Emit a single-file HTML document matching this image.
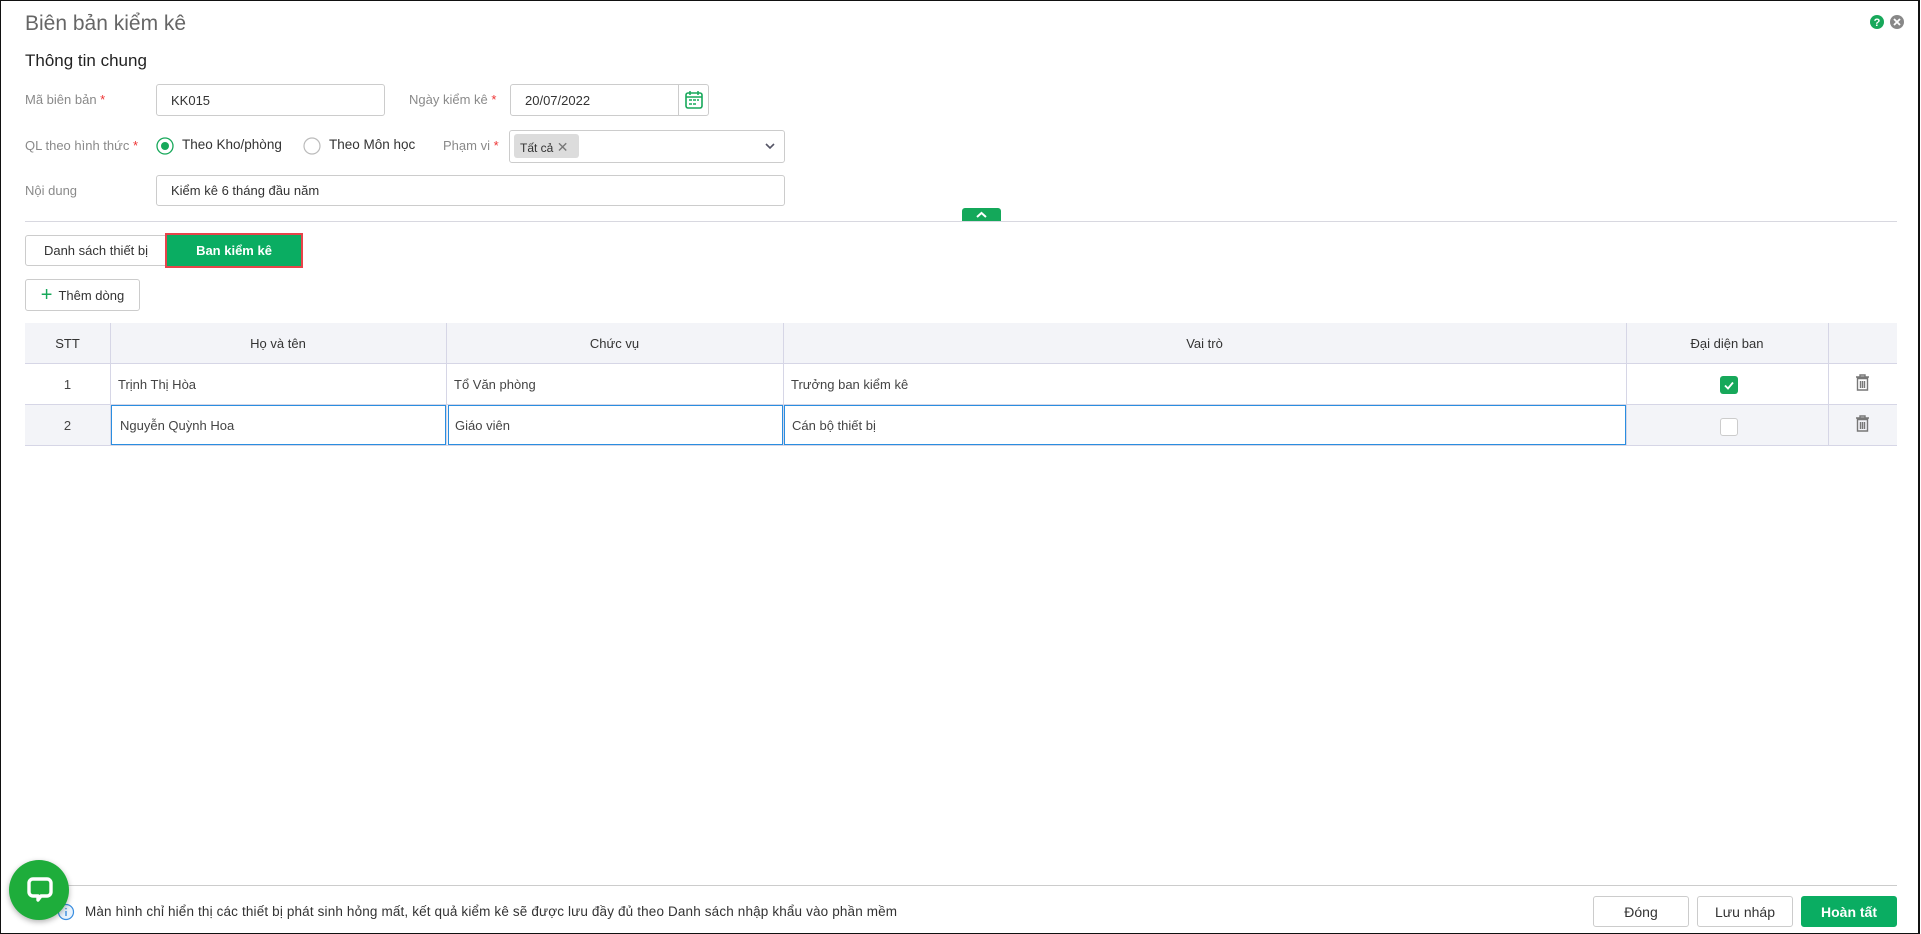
<!DOCTYPE html>
<html><head><meta charset="utf-8"><style>
*{box-sizing:border-box;margin:0;padding:0}
body{width:1921px;height:934px;overflow:hidden;background:#fff;font-family:"Liberation Sans",sans-serif;font-size:13px;color:#333;position:relative}
.a{position:absolute}
.frame{left:0;top:0;width:1920px;height:934px;border:1.5px solid #111;border-right-width:2.5px}
.lbl{color:#8a8a8a;font-size:13px;line-height:16px}
.req{color:#e33}
.inp{border:1px solid #ccc;border-radius:3px;background:#fff;padding-left:14px;display:flex;align-items:center;font-size:13px;color:#333}
.th{position:absolute;top:323px;height:40px;display:flex;align-items:center;justify-content:center;font-size:13px;color:#333}
.btn{border:1px solid #ccc;border-radius:3px;background:#fff;display:flex;align-items:center;justify-content:center;font-size:14px;color:#333}
.cell{display:flex;align-items:center;font-size:13px;color:#444}
</style></head><body>
<div class="a frame"></div>
<div class="a" style="left:25px;top:12px;font-size:21px;color:#666">Biên bản kiểm kê</div>
<svg class="a" style="left:1870px;top:15px" width="35" height="15"><circle cx="7" cy="7" r="7" fill="#17a85a"/><text x="7" y="11" font-size="11" font-weight="bold" fill="#fff" text-anchor="middle" font-family="Liberation Sans">?</text><circle cx="27" cy="7" r="7" fill="#888"/><path d="M24 4l6 6M30 4l-6 6" stroke="#fff" stroke-width="1.8"/></svg>
<div class="a" style="left:25px;top:51px;font-size:17px;color:#222">Thông tin chung</div>

<div class="a lbl" style="left:25px;top:92px">Mã biên bản <span class="req">*</span></div>
<div class="a inp" style="left:156px;top:84px;width:229px;height:32px">KK015</div>
<div class="a lbl" style="left:409px;top:92px">Ngày kiểm kê <span class="req">*</span></div>
<div class="a inp" style="left:510px;top:84px;width:199px;height:32px">20/07/2022</div>
<div class="a" style="left:678px;top:85px;width:1px;height:30px;background:#ccc"></div>
<svg class="a" style="left:684px;top:90px" width="20" height="20"><rect x="2" y="3" width="16" height="15" rx="2" fill="none" stroke="#17a85a" stroke-width="1.6"/><path d="M2 7h16M6 1v4M14 1v4M5 10h3M9 10h3M13 10h2M5 14h3M9 14h3" stroke="#17a85a" stroke-width="1.5"/></svg>

<div class="a lbl" style="left:25px;top:138px">QL theo hình thức <span class="req">*</span></div>
<svg class="a" style="left:156px;top:137px" width="18" height="18"><circle cx="9" cy="9" r="8" fill="none" stroke="#17a85a" stroke-width="1.3"/><circle cx="9" cy="9" r="4" fill="#17a85a"/></svg>
<div class="a" style="left:182px;top:137px;font-size:13.5px;color:#333">Theo Kho/phòng</div>
<svg class="a" style="left:303px;top:137px" width="18" height="18"><circle cx="9" cy="9" r="8" fill="none" stroke="#bbb" stroke-width="1.2"/></svg>
<div class="a" style="left:329px;top:137px;font-size:13.5px;color:#333">Theo Môn học</div>
<div class="a lbl" style="left:443px;top:138px">Phạm vi <span class="req">*</span></div>
<div class="a inp" style="left:509px;top:130px;width:276px;height:33px;padding-left:0"></div>
<div class="a" style="left:514px;top:134px;width:65px;height:24px;background:#dcdcdc;border-radius:3px;font-size:12px;color:#333;padding:5px 0 0 6px">Tất cả <span style="color:#777;font-size:14px">✕</span></div>
<svg class="a" style="left:764px;top:141px" width="12" height="10"><path d="M2 3l4 4 4-4" fill="none" stroke="#556" stroke-width="1.6"/></svg>

<div class="a lbl" style="left:25px;top:183px">Nội dung</div>
<div class="a inp" style="left:156px;top:175px;width:629px;height:31px">Kiểm kê 6 tháng đầu năm</div>

<div class="a" style="left:25px;top:221px;width:1872px;height:1px;background:#d8d8e0"></div>
<div class="a" style="left:962px;top:208px;width:39px;height:13px;background:#14a85a;border-radius:3px 3px 0 0"></div>
<svg class="a" style="left:975px;top:210px" width="13" height="9"><path d="M2 7l4.5-4 4.5 4" fill="none" stroke="#fff" stroke-width="2"/></svg>

<div class="a btn" style="left:25px;top:235px;width:142px;height:31px;font-size:13px;border-radius:3px 0 0 3px">Danh sách thiết bị</div>
<div class="a" style="left:165px;top:233px;width:138px;height:35px;border:2px solid #e8434a;background:#0aad62;color:#fff;font-weight:bold;font-size:13px;display:flex;align-items:center;justify-content:center">Ban kiểm kê</div>

<div class="a btn" style="left:25px;top:279px;width:115px;height:32px;font-size:13px"><span style="color:#17a85a;font-size:20px;margin-right:6px;line-height:14px">+</span>Thêm dòng</div>

<div class="a" style="left:25px;top:323px;width:1872px;height:40px;background:#f3f4f8"></div>
<div class="a" style="left:25px;top:404px;width:1872px;height:41px;background:#f3f4f8"></div>
<div class="a" style="left:25px;top:363px;width:1872px;height:1px;background:#d6d6e6"></div>
<div class="a" style="left:25px;top:404px;width:1872px;height:1px;background:#d6d6e6"></div>
<div class="a" style="left:25px;top:445px;width:1872px;height:1px;background:#d6d6e6"></div>
<div class="a" style="left:110px;top:323px;width:1px;height:122px;background:#d6d6e6"></div>
<div class="a" style="left:446px;top:323px;width:1px;height:122px;background:#d6d6e6"></div>
<div class="a" style="left:783px;top:323px;width:1px;height:122px;background:#d6d6e6"></div>
<div class="a" style="left:1626px;top:323px;width:1px;height:122px;background:#d6d6e6"></div>
<div class="a" style="left:1828px;top:323px;width:1px;height:122px;background:#d6d6e6"></div>
<div class="th" style="left:25px;width:85px">STT</div>
<div class="th" style="left:110px;width:336px">Họ và tên</div>
<div class="th" style="left:446px;width:337px">Chức vụ</div>
<div class="th" style="left:783px;width:843px">Vai trò</div>
<div class="th" style="left:1626px;width:202px">Đại diện ban</div>

<div class="a cell" style="left:25px;top:364px;width:85px;height:40px;justify-content:center">1</div>
<div class="a cell" style="left:118px;top:364px;height:40px">Trịnh Thị Hòa</div>
<div class="a cell" style="left:454px;top:364px;height:40px">Tổ Văn phòng</div>
<div class="a cell" style="left:791px;top:364px;height:40px">Trưởng ban kiểm kê</div>
<svg class="a" style="left:1720px;top:376px" width="18" height="18"><rect width="18" height="18" rx="3" fill="#17a85a"/><path d="M5 9.5l3 3 5-6" fill="none" stroke="#fff" stroke-width="1.8"/></svg>
<svg class="a" style="left:1855px;top:374px" width="15" height="17"><path d="M1 3h13M5 3V1h5v2M2.5 4.5h10v11.5h-10z M5.5 7v7M7.5 7v7M9.5 7v7" fill="none" stroke="#777" stroke-width="1.4"/></svg>

<div class="a cell" style="left:25px;top:405px;width:85px;height:40px;justify-content:center">2</div>
<div class="a cell" style="left:111px;top:405px;width:335px;height:40px;background:#fff;border:1.5px solid #2a8ee0;padding-left:8px">Nguyễn Quỳnh Hoa</div>
<div class="a cell" style="left:448px;top:405px;width:335px;height:40px;background:#fff;border:1.5px solid #2a8ee0;padding-left:6px">Giáo viên</div>
<div class="a cell" style="left:784px;top:405px;width:842px;height:40px;background:#fff;border:1.5px solid #2a8ee0;padding-left:7px">Cán bộ thiết bị</div>
<div class="a" style="left:1720px;top:418px;width:18px;height:18px;border:1px solid #ccc;border-radius:3px;background:#fff"></div>
<svg class="a" style="left:1855px;top:415px" width="15" height="17"><path d="M1 3h13M5 3V1h5v2M2.5 4.5h10v11.5h-10z M5.5 7v7M7.5 7v7M9.5 7v7" fill="none" stroke="#777" stroke-width="1.4"/></svg>

<div class="a" style="left:60px;top:885px;width:1837px;height:1px;background:#ccc"></div>
<svg class="a" style="left:57px;top:903px" width="18" height="18"><circle cx="9" cy="9" r="7.5" fill="#e8f2fc" stroke="#3a8ee0" stroke-width="1.2"/><path d="M9 8v5M9 5v1.3" stroke="#3a8ee0" stroke-width="1.4"/></svg>
<div class="a" style="left:85px;top:904px;font-size:13.5px;color:#333;letter-spacing:0.15px">Màn hình chỉ hiển thị các thiết bị phát sinh hỏng mất, kết quả kiểm kê sẽ được lưu đầy đủ theo Danh sách nhập khẩu vào phần mềm</div>
<div class="a btn" style="left:1593px;top:896px;width:96px;height:31px">Đóng</div>
<div class="a btn" style="left:1697px;top:896px;width:96px;height:31px">Lưu nháp</div>
<div class="a btn" style="left:1801px;top:896px;width:96px;height:31px;background:#0aad62;border-color:#0aad62;color:#fff;font-weight:bold">Hoàn tất</div>

<div class="a" style="left:9px;top:860px;width:60px;height:60px;border-radius:50%;background:#1ead3b;box-shadow:0 2px 6px rgba(0,0,0,.3)"></div>
<svg class="a" style="left:26px;top:876px" width="28" height="28"><path d="M7 3h14a4 4 0 0 1 4 4v9a4 4 0 0 1-4 4h-6l-3 4v-4H7a4 4 0 0 1-4-4V7a4 4 0 0 1 4-4z" fill="none" stroke="#fff" stroke-width="3.4" stroke-linejoin="round"/></svg>
</body></html>
